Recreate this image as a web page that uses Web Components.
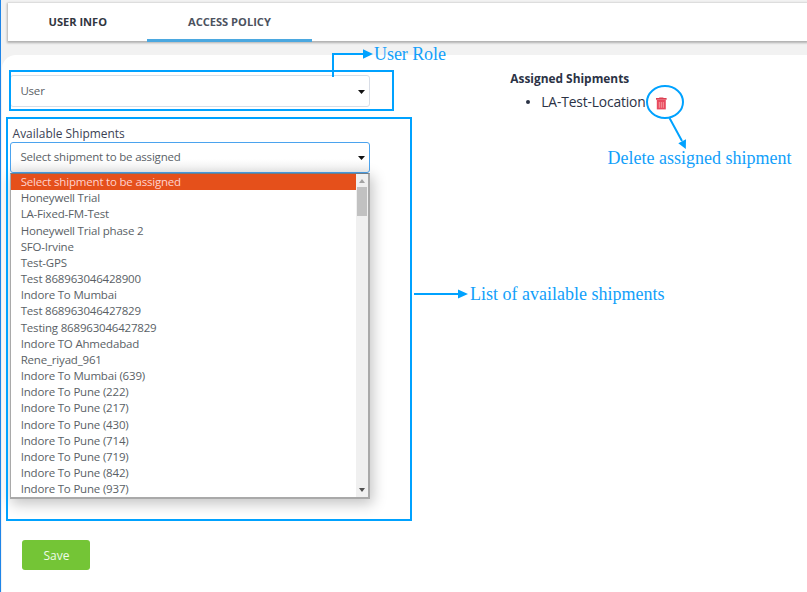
<!DOCTYPE html>
<html lang="en">
<head>
<meta charset="utf-8">
<title>Access policy</title>
<style>
html, body { margin: 0; height: 592px; overflow: hidden; }
body { font-family: "Open Sans", "Noto Sans", sans-serif; }
</style>
</head>
<body>
<policy-page></policy-page>
<script>
const define = (name, html, setup) => customElements.define(name, class extends HTMLElement {
  connectedCallback() {
    if (this.shadowRoot) return;
    const t = document.createElement('template');
    t.innerHTML = html;
    this.attachShadow({ mode: 'open' }).append(t.content.cloneNode(true));
    if (setup) setup(this);
  }
});

define('tab-bar', `<style>
:host { display: flex; height: 38px; background: #fff; box-shadow: 0 1px 2px 1px rgba(0,0,0,.27); }
</style><slot></slot>`);

define('tab-item', `<style>
:host { display: block; box-sizing: border-box; height: 38px; padding: 0 41px; font-weight: 700; font-size: 11.1px; line-height: 37px; color: #32363f; white-space: nowrap; }
:host([first]) { width: 139px; padding-left: 40.5px; }
:host([active]) { width: 165px; height: 38.5px; color: #4c525e; border-bottom: 3px solid #4ba8e0; }
</style><slot></slot>`);

define('select-box', `<style>
:host { display: flex; align-items: center; justify-content: space-between; box-sizing: border-box; width: 360px; height: 32px; padding: 0 4.5px 0 9.4px; border: 1px solid #d8dde6; border-radius: 3px; background: #fff; color: #5a5f66; font-size: 11.5px; letter-spacing: -.19px; line-height: 16px; position: relative; }
span { margin-top: -1px; }
:host([open]) { border-color: #4ba3ee; background: linear-gradient(#fff 55%, #f1f1f1); height: 31px; padding-bottom: 1px; }
svg { display: block; margin-top: 2px; }
</style><span><slot></slot></span><svg width="7" height="4"><path d="M0 0H7L3.5 4Z" fill="#111"/></svg><slot name="menu"></slot>`);

define('option-list', `<style>
:host { display: grid; grid-template-columns: 1fr 12px; position: absolute; left: -1px; top: 30px; box-sizing: border-box; width: 360px; height: 326px; border: 1px solid #a9a9a9; border-right-width: 2px; border-bottom-width: 2px; border-top: 1px solid #6f7c87; background: #fff; box-shadow: 2px 4px 13px 1px rgba(0,0,0,.23); z-index: 1; }
.items { display: flex; flex-direction: column; }
.bar { display: flex; flex-direction: column; align-items: center; justify-content: space-between; background: #f0f0f0; padding: 5px 0 5px; height: 313px; }
.bar svg { display: block; flex: none; }
.thumb { width: 10px; height: 29px; margin-top: 4px; background: #c1c1c1; }
.top { display: flex; flex-direction: column; align-items: center; }
</style><div class="items"><slot></slot></div><div class="bar"><div class="top"><svg width="6" height="4"><path d="M3 0L6 4H0Z" fill="#a3a3a3"/></svg><div class="thumb"></div></div><svg width="6" height="4"><path d="M0 0H6L3 4Z" fill="#505050"/></svg></div>`);

define('list-option', `<style>
:host { display: block; box-sizing: border-box; height: 16.18px; padding-left: 9.7px; line-height: 16.2px; font-size: 11.5px; letter-spacing: -.19px; color: #5a5f66; white-space: nowrap; }
:host([selected]) { background: #e5501b; color: #ffd3cf; }
</style><slot></slot>`);

define('save-button', `<style>
:host { display: block; width: 68px; height: 30px; border-radius: 3px; background: #74c536; color: #eefbe6; font-size: 12px; line-height: 31px; text-align: center; }
</style><slot></slot>`);

define('trash-icon', `<style>
:host { display: block; width: 11px; height: 13px; } svg { display: block; }
</style><svg width="11" height="13" viewBox="0 0 11 13"><path d="M3.2 1V.4H7.4V1H10.6V2.7H0V1Z" fill="#dc3e50"/><path d="M.8 3H9.8V12.4H.8Z" fill="#e84a5f"/><path d="M3.3 5V10.8M5.3 5V10.8M7.3 5V10.8" stroke="#f7a0a4" stroke-width=".9"/></svg>`);

define('assigned-panel', `<style>
:host { display: block; color: #2b3245; }
h3 { margin: 0; font-size: 11.9px; line-height: 18px; font-weight: 700; }
.row { display: flex; align-items: center; height: 22px; margin-top: 3px; padding-left: 16px; font-size: 13.8px; letter-spacing: -.15px; white-space: nowrap; }
.dot { width: 4px; height: 4px; border-radius: 50%; background: #2b3245; margin: 1px 11px 0 0; }
.name { margin-top: 1px; }
trash-icon { margin: 4px 0 0 11px; }
</style><h3>Assigned Shipments</h3><div class="row"><span class="dot"></span><span class="name"><slot></slot></span><trash-icon></trash-icon></div>`);

define('annotation-layer', `<style>
:host { position: absolute; inset: 0; z-index: 5; pointer-events: none; color: #0a9cf9; }
svg { display: block; }
text { font-family: "Liberation Serif", serif; font-size: 18px; fill: #129ffa; }
</style><svg width="807" height="592" fill="none" stroke="#00a2ff" stroke-width="2">
<rect x="10" y="71" width="383" height="39"/>
<rect x="7" y="118" width="404" height="402"/>
<path d="M333 77V54H364M414 294H459M669.5 118L682 141"/>
<ellipse cx="665" cy="102" rx="18" ry="16"/>
<g fill="#00a2ff" stroke="none"><path d="M363 49.2V58.8L373 54ZM458 289.5V298.5L468 294ZM678.3 143.3L686 139.2L685.8 149Z"/></g>
<g stroke="none"><text x="374" y="60" textLength="72" lengthAdjust="spacing">User Role</text><text x="607.5" y="164" textLength="184">Delete assigned shipment</text><text x="470" y="300" textLength="194.5">List of available shipments</text></g></svg>`);

define('policy-page', `<style>
:host { display: flex; flex-direction: column; box-sizing: border-box; position: relative; width: 807px; height: 592px; padding-top: 3px; border-left: 1px solid #1f85e8; background: #f2f2f2; overflow: hidden; }
tab-bar { margin-left: 7px; flex: none; }
main { display: grid; grid-template-columns: 500px 1fr; flex: 1; margin: 14px 0 0 1px; background: #fff; border-radius: 14px 0 0 0; }
.form { display: flex; flex-direction: column; padding: 20px 0 0 8px; }
label { margin: 18px 0 0 2.6px; font-size: 11.95px; line-height: 17px; color: #3c4254; }
save-button { margin: 367px 0 0 12.4px; }
assigned-panel { padding: 14px 0 0 8.3px; }
annotation-layer { left: -1px; }
</style>
<tab-bar><tab-item first>USER INFO</tab-item><tab-item active>ACCESS POLICY</tab-item></tab-bar>
<main><div class="form"><select-box>User</select-box><label>Available Shipments</label>
<select-box open>Select shipment to be assigned<option-list slot="menu"></option-list></select-box>
<save-button>Save</save-button></div>
<assigned-panel>LA-Test-Location</assigned-panel></main>
<annotation-layer></annotation-layer>`, el => {
  const items = ['Select shipment to be assigned', 'Honeywell Trial', 'LA-Fixed-FM-Test', 'Honeywell Trial phase 2', 'SFO-Irvine', 'Test-GPS', 'Test 868963046428900', 'Indore To Mumbai', 'Test 868963046427829', 'Testing 868963046427829', 'Indore TO Ahmedabad', 'Rene_riyad_961', 'Indore To Mumbai (639)', 'Indore To Pune (222)', 'Indore To Pune (217)', 'Indore To Pune (430)', 'Indore To Pune (714)', 'Indore To Pune (719)', 'Indore To Pune (842)', 'Indore To Pune (937)'];
  const list = el.shadowRoot.querySelector('option-list');
  items.forEach((text, i) => {
    const o = document.createElement('list-option');
    o.textContent = text;
    if (!i) o.setAttribute('selected', '');
    list.append(o);
  });
});
</script>
</body>
</html>
